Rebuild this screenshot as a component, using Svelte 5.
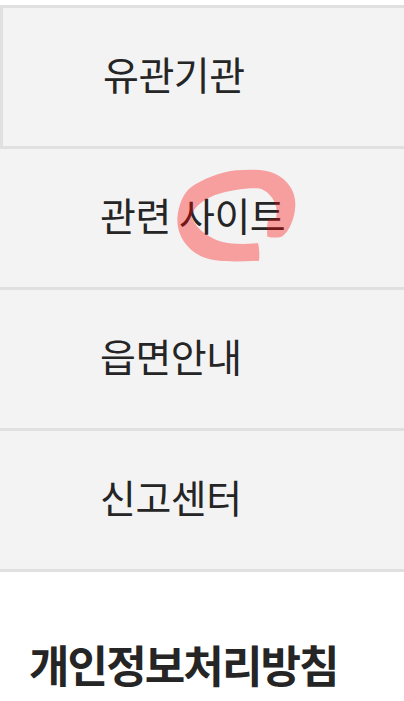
<script>
  const links = ['유관기관', '관련 사이트', '읍면안내', '신고센터'];
</script>

<style>
  :global(body) {
    background: #fff;
    font-family: "Noto Sans CJK KR", "Noto Sans", sans-serif;
    color: #252525;
    overflow: hidden;
  }

  .page {
    position: relative;
    height: 701px;
    overflow: hidden;
    padding-top: 5px;
    box-sizing: border-box;
  }

  .menu {
    list-style: none;
    margin: 0;
    padding: 0;
  }

  .menu__item {
    background: #f3f3f3;
    border-bottom: 3px solid #e0e0e0;
    box-sizing: border-box;
    height: 141px;
    display: flex;
    align-items: center;
    padding: 0 0 7px 100px;
    font-size: 39px;
    letter-spacing: -0.5px;
    line-height: 1;
  }

  .menu__item:first-child {
    border-top: 3px solid #e0e0e0;
    border-left: 3px solid #e0e0e0;
    height: 144px;
  }

  .footer-title {
    margin: 0;
    padding: 59px 0 0 29px;
    font-size: 44px;
    font-weight: 700;
    letter-spacing: -1.9px;
    line-height: 1.5;
  }

  .scribble {
    position: absolute;
    left: 160px;
    top: 155px;
    pointer-events: none;
  }
</style>

<div class="page">
  <ul class="menu">
    {#each links as link}
      <li class="menu__item">{link}</li>
    {/each}
  </ul>
  <h2 class="footer-title">개인정보처리방침</h2>
  <svg class="scribble" width="150" height="120" viewBox="0 0 450 360">
    <path
      d="M322 245 C340 248 358 250 368 243 C388 228 405 190 406 150 C407 110 385 75 345 56 C315 43 270 43 230 46 C180 50 125 75 95 95 C70 112 55 150 52 190 C50 240 80 285 130 307 C170 323 240 320 297 317 C299 300 298 280 294 264 C260 268 215 268 185 260 C150 250 105 220 95 185 C100 155 130 135 165 120 C210 105 260 98 295 100 C325 105 350 140 350 168 C350 180 349 188 347 193 C338 190 330 192 324 195 C321 210 321 230 322 245 Z"
      fill="#ff0000"
      fill-opacity="0.35"
    />
  </svg>
</div>
